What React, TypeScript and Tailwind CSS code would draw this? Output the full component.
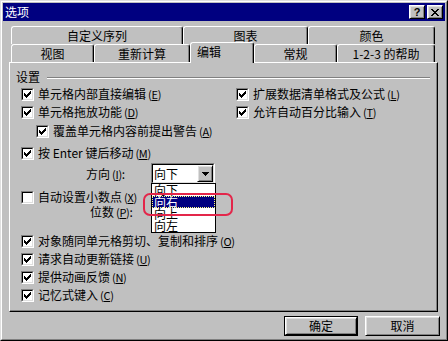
import React from "react";

const raised =
  "border border-t-white border-l-white border-r-black border-b-black shadow-[inset_1px_1px_0_#dfdfdf,inset_-1px_-1px_0_#808080]";

function Acc({ k }: { k: string }) {
  return (
    <span className="ml-[2px] text-[11px] tracking-[-0.3px]">
      (<span className="underline underline-offset-[1px]">{k}</span>)
    </span>
  );
}

function Box({ checked = true }: { checked?: boolean }) {
  return (
    <div className="w-[13px] h-[13px] shrink-0 border border-t-[#808080] border-l-[#808080] border-r-white border-b-white">
      <div className="w-full h-full border border-t-black border-l-black border-r-[#dfdfdf] border-b-[#dfdfdf] bg-white flex items-center justify-center">
        {checked && (
          <svg width="7" height="7" viewBox="0 0 7 7" shapeRendering="crispEdges">
            <path
              d="M6 0h1v1h-1z M5 1h2v1h-2z M0 2h1v1h-1z M4 2h3v1h-3z M0 3h2v1h-2z M3 3h3v1h-3z M0 4h5v1h-5z M1 5h3v1h-3z M2 6h1v1h-1z"
              fill="#000"
            />
          </svg>
        )}
      </div>
    </div>
  );
}

function CheckRow({
  children,
  checked = true,
  className = "",
}: {
  children: React.ReactNode;
  checked?: boolean;
  className?: string;
}) {
  return (
    <div className={"flex items-center gap-[4px] " + className}>
      <Box checked={checked} />
      <span className="whitespace-nowrap">{children}</span>
    </div>
  );
}

function Tab({ w, children }: { w: string; children: React.ReactNode }) {
  return (
    <div
      className={
        w +
        " h-[18px] shrink-0 border-t border-l border-r border-t-white border-l-white border-r-black rounded-t-[3px] shadow-[inset_-1px_0_0_#808080] flex items-center justify-center whitespace-nowrap"
      }
    >
      {children}
    </div>
  );
}

export default function App() {
  return (
    <div className="w-[448px] h-[341px] bg-[#c0c0c0] border border-t-[#dfdfdf] border-l-[#dfdfdf] border-r-black border-b-black font-['Noto_Sans_CJK_SC',sans-serif] text-[12px] leading-[12px] text-black">
      <div className="h-full border border-t-white border-l-white border-r-[#808080] border-b-[#808080] p-px flex flex-col">
        {/* Title bar */}
        <div className="h-[18px] shrink-0 bg-[#000080] flex items-center pl-[2px] pr-[2px]">
          <span className="text-white">选项</span>
          <div className="ml-auto flex gap-[2px]">
            <div className={"w-[16px] h-[14px] flex items-center justify-center bg-[#c0c0c0] " + raised}>
              <span className="font-['Liberation_Sans',sans-serif] font-bold text-[11px] leading-none">?</span>
            </div>
            <div className={"w-[16px] h-[14px] flex items-center justify-center bg-[#c0c0c0] " + raised}>
              <svg width="8" height="7" viewBox="0 0 8 7" shapeRendering="crispEdges">
                <path
                  d="M0 0h2v1h-2z M6 0h2v1h-2z M1 1h2v1h-2z M5 1h2v1h-2z M2 2h4v1h-4z M3 3h2v1h-2z M2 4h4v1h-4z M1 5h2v1h-2z M5 5h2v1h-2z M0 6h2v1h-2z M6 6h2v1h-2z"
                  fill="#000"
                />
              </svg>
            </div>
          </div>
        </div>

        {/* Tabs row 1 */}
        <div className="mt-[5px] ml-[8px] flex h-[18px]">
          <Tab w="w-[172px]">自定义序列</Tab>
          <Tab w="w-[125px]">图表</Tab>
          <Tab w="w-[127px]">颜色</Tab>
        </div>
        {/* Tabs row 2 */}
        <div className="ml-[8px] flex h-[18px] items-start">
          <Tab w="w-[83px]">视图</Tab>
          <Tab w="w-[96px]">重新计算</Tab>
          <div className="relative z-10 -mt-[2px] w-[64px] h-[21px] shrink-0 bg-[#c0c0c0] border-t border-l border-r border-t-white border-l-white border-r-black rounded-t-[3px] shadow-[inset_-1px_0_0_#808080] pl-[6px] pt-[3px]">
            编辑
          </div>
          <Tab w="w-[83px]">常规</Tab>
          <Tab w="w-[98px]">1-2-3 的帮助</Tab>
        </div>

        {/* Panel */}
        <div className="relative ml-[6px] w-[429px] h-[250px] shrink-0 border border-t-white border-l-white border-r-black border-b-black shadow-[inset_-1px_-1px_0_#808080] flex flex-col">
          {/* group header */}
          <div className="mt-[7px] h-[14px] flex items-center pl-[6px] pr-[7px]">
            <span>设置</span>
            <div className="ml-[7px] flex-1 h-[2px] border-t border-t-[#808080] border-b border-b-white translate-y-[1px]" />
          </div>

          <div className="pl-[11px] flex flex-col">
            <div className="mt-[1px] h-[18px] flex items-center">
              <CheckRow className="w-[215px]">
                单元格内部直接编辑<Acc k="E" />
              </CheckRow>
              <CheckRow>
                扩展数据清单格式及公式<Acc k="L" />
              </CheckRow>
            </div>
            <div className="h-[18px] flex items-center">
              <CheckRow className="w-[215px]">
                单元格拖放功能<Acc k="D" />
              </CheckRow>
              <CheckRow>
                允许自动百分比输入<Acc k="T" />
              </CheckRow>
            </div>
            <div className="mt-[1px] h-[18px] flex items-center pl-[15px]">
              <CheckRow>
                覆盖单元格内容前提出警告<Acc k="A" />
              </CheckRow>
            </div>
            <div className="mt-[4px] h-[18px] flex items-center">
              <CheckRow>
                按 Enter 键后移动<Acc k="M" />
              </CheckRow>
            </div>

            {/* direction row */}
            <div className="mt-[1px] h-[21px] flex items-center">
              <div className="ml-[65px] w-[65px] whitespace-nowrap">
                方向<Acc k="I" />:
              </div>
              <div className="relative w-[64px] h-[21px] border border-t-[#808080] border-l-[#808080] border-r-white border-b-white">
                <div className="w-full h-full border border-t-black border-l-black border-r-[#dfdfdf] border-b-[#dfdfdf] bg-white flex">
                  <div className="flex-1 flex items-center pl-[1px]">向下</div>
                  <div className={"w-[16px] h-full bg-[#c0c0c0] flex items-center justify-center " + raised}>
                    <svg width="7" height="4" viewBox="0 0 7 4" shapeRendering="crispEdges">
                      <path d="M0 0h7v1h-7z M1 1h5v1h-5z M2 2h3v1h-3z M3 3h1v1h-1z" fill="#000" />
                    </svg>
                  </div>
                </div>

                {/* open list */}
                <div className="absolute left-[-1px] top-[19px] w-[65px] h-[50px] z-20 border border-black bg-white flex flex-col">
                  <div className="h-[12px] shrink-0 pl-[2px] flex items-center">向下</div>
                  <div className="h-[12px] shrink-0 bg-[#000080] text-white outline outline-1 outline-dotted outline-[#ffff80] -outline-offset-1 pl-[2px] flex items-center">
                    向右
                  </div>
                  <div className="h-[12px] shrink-0 pl-[2px] flex items-center">向上</div>
                  <div className="h-[12px] shrink-0 pl-[2px] flex items-center">向左</div>
                </div>
                {/* red annotation */}
                <div className="absolute left-[-9px] top-[29px] w-[90px] h-[23px] z-30 border-2 border-[#e3264a] rounded-[7px]" />
              </div>
            </div>

            <div className="mt-[4px] h-[18px] flex items-center">
              <CheckRow checked={false}>
                自动设置小数点<Acc k="X" />
              </CheckRow>
            </div>
            <div className="h-[12px] flex items-center">
              <div className="ml-[69px] whitespace-nowrap">
                位数<Acc k="P" />:
              </div>
            </div>

            <div className="mt-[14px] h-[18px] flex items-center">
              <CheckRow>
                对象随同单元格剪切、复制和排序<Acc k="O" />
              </CheckRow>
            </div>
            <div className="h-[18px] flex items-center">
              <CheckRow>
                请求自动更新链接<Acc k="U" />
              </CheckRow>
            </div>
            <div className="h-[18px] flex items-center">
              <CheckRow>
                提供动画反馈<Acc k="N" />
              </CheckRow>
            </div>
            <div className="h-[18px] flex items-center">
              <CheckRow>
                记忆式键入<Acc k="C" />
              </CheckRow>
            </div>
          </div>
        </div>

        {/* Buttons */}
        <div className="mt-[4px] h-[20px] flex justify-end gap-[7px] pr-[5px]">
          <div className="w-[74px] h-[20px] border border-black">
            <div className={"w-full h-full flex items-center justify-center " + raised}>确定</div>
          </div>
          <div className={"w-[75px] h-[20px] flex items-center justify-center " + raised}>取消</div>
        </div>
      </div>
    </div>
  );
}
